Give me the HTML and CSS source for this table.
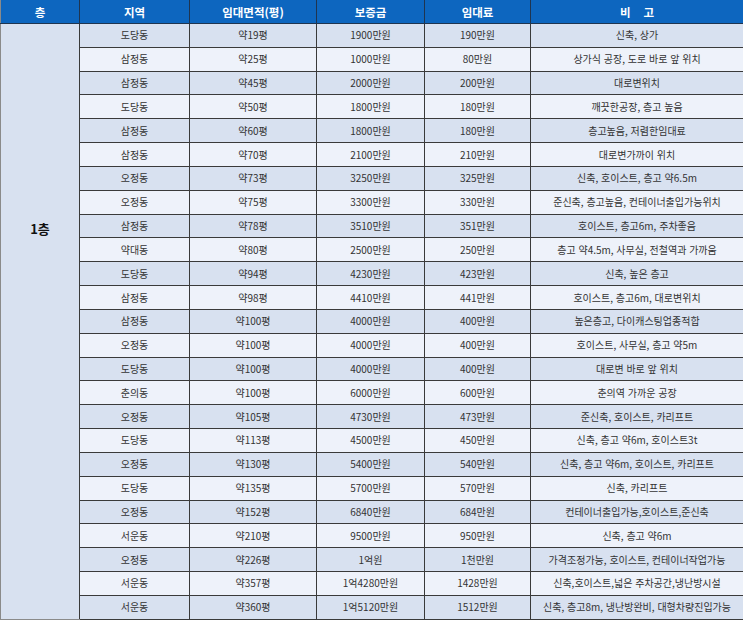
FILE: index.html
```html
<!DOCTYPE html>
<html lang="ko">
<head>
<meta charset="utf-8">
<link rel="stylesheet" href="styles.css">
</head>
<body>
<table class="list">
  <colgroup>
    <col class="c1"><col class="c2"><col class="c3"><col class="c4"><col class="c5"><col class="c6">
  </colgroup>
  <thead>
    <tr><th>층</th><th>지역</th><th>임대면적(평)</th><th>보증금</th><th>임대료</th><th>비&nbsp;&nbsp;&nbsp;&nbsp;고</th></tr>
  </thead>
  <tbody>
    <tr class="a"><td class="floor" rowspan="25">1층</td><td>도당동</td><td>약19평</td><td>1900만원</td><td>190만원</td><td>신축, 상가</td></tr>
    <tr class="b"><td>삼정동</td><td>약25평</td><td>1000만원</td><td>80만원</td><td>상가식 공장, 도로 바로 앞 위치</td></tr>
    <tr class="a"><td>삼정동</td><td>약45평</td><td>2000만원</td><td>200만원</td><td>대로변위치</td></tr>
    <tr class="b"><td>도당동</td><td>약50평</td><td>1800만원</td><td>180만원</td><td>깨끗한공장, 층고 높음</td></tr>
    <tr class="a"><td>삼정동</td><td>약60평</td><td>1800만원</td><td>180만원</td><td>층고높음, 저렴한임대료</td></tr>
    <tr class="b"><td>삼정동</td><td>약70평</td><td>2100만원</td><td>210만원</td><td>대로변가까이 위치</td></tr>
    <tr class="a"><td>오정동</td><td>약73평</td><td>3250만원</td><td>325만원</td><td>신축, 호이스트, 층고 약6.5m</td></tr>
    <tr class="b"><td>오정동</td><td>약75평</td><td>3300만원</td><td>330만원</td><td>준신축, 층고높음, 컨테이너출입가능위치</td></tr>
    <tr class="a"><td>삼정동</td><td>약78평</td><td>3510만원</td><td>351만원</td><td>호이스트, 층고6m, 주차좋음</td></tr>
    <tr class="b"><td>약대동</td><td>약80평</td><td>2500만원</td><td>250만원</td><td>층고 약4.5m, 사무실, 전철역과 가까움</td></tr>
    <tr class="a"><td>도당동</td><td>약94평</td><td>4230만원</td><td>423만원</td><td>신축, 높은 층고</td></tr>
    <tr class="b"><td>삼정동</td><td>약98평</td><td>4410만원</td><td>441만원</td><td>호이스트, 층고6m, 대로변위치</td></tr>
    <tr class="a"><td>삼정동</td><td>약100평</td><td>4000만원</td><td>400만원</td><td>높은층고, 다이캐스팅업종적합</td></tr>
    <tr class="b"><td>오정동</td><td>약100평</td><td>4000만원</td><td>400만원</td><td>호이스트, 사무실, 층고 약5m</td></tr>
    <tr class="a"><td>도당동</td><td>약100평</td><td>4000만원</td><td>400만원</td><td>대로변 바로 앞 위치</td></tr>
    <tr class="b"><td>춘의동</td><td>약100평</td><td>6000만원</td><td>600만원</td><td>춘의역 가까운 공장</td></tr>
    <tr class="a"><td>오정동</td><td>약105평</td><td>4730만원</td><td>473만원</td><td>준신축, 호이스트, 카리프트</td></tr>
    <tr class="b"><td>도당동</td><td>약113평</td><td>4500만원</td><td>450만원</td><td>신축, 층고 약6m, 호이스트3t</td></tr>
    <tr class="a"><td>오정동</td><td>약130평</td><td>5400만원</td><td>540만원</td><td>신축, 층고 약6m, 호이스트, 카리프트</td></tr>
    <tr class="b"><td>도당동</td><td>약135평</td><td>5700만원</td><td>570만원</td><td>신축, 카리프트</td></tr>
    <tr class="a"><td>오정동</td><td>약152평</td><td>6840만원</td><td>684만원</td><td>컨테이너출입가능,호이스트,준신축</td></tr>
    <tr class="b"><td>서운동</td><td>약210평</td><td>9500만원</td><td>950만원</td><td>신축, 층고 약6m</td></tr>
    <tr class="a"><td>오정동</td><td>약226평</td><td>1억원</td><td>1천만원</td><td>가격조정가능, 호이스트, 컨테이너작업가능</td></tr>
    <tr class="b"><td>서운동</td><td>약357평</td><td>1억4280만원</td><td>1428만원</td><td>신축,호이스트,넓은 주차공간,냉난방시설</td></tr>
    <tr class="a"><td>서운동</td><td>약360평</td><td>1억5120만원</td><td>1512만원</td><td>신축, 층고8m, 냉난방완비, 대형차량진입가능</td></tr>
  </tbody>
</table>
</body>
</html>
```

FILE: styles.css
```css
html, body {
  margin: 0;
  padding: 0;
  background: #ffffff;
}

.list {
  width: 743px;
  table-layout: fixed;
  border-collapse: collapse;
  font-family: "Noto Sans CJK KR", "Noto Sans", sans-serif;
  font-size: 10px;
  color: #333333;
}

.c1 { width: 79px; }
.c2 { width: 110px; }
.c3 { width: 127px; }
.c4 { width: 108px; }
.c5 { width: 106px; }
.c6 { width: 213px; }

.list th {
  height: 23px;
  padding: 0;
  background: #0d66bf;
  color: #ffffff;
  font-size: 11.5px;
  font-weight: bold;
  text-align: center;
  border: 1px solid #1f3550;
  border-top: 0;
  line-height: 22px;
}

.list td {
  height: 22.84px;
  padding: 0;
  text-align: center;
  border: 1px solid #3a3a3a;
  line-height: 14px;
  white-space: nowrap;
}

.list tr.a td { background: #d8e1f0; }
.list tr.b td { background: #eef2fa; }

.list td.floor {
  background: #d6e0ef;
  font-size: 13px;
  font-weight: bold;
  color: #111111;
  vertical-align: top;
  padding-top: 195px;
  line-height: 20px;
  border-left: 1px solid #8a8a8a;
  border-bottom: 1px solid #8a8a8a;
}

.list th:first-child { border-left: 1px solid #8a8a8a; }
```
